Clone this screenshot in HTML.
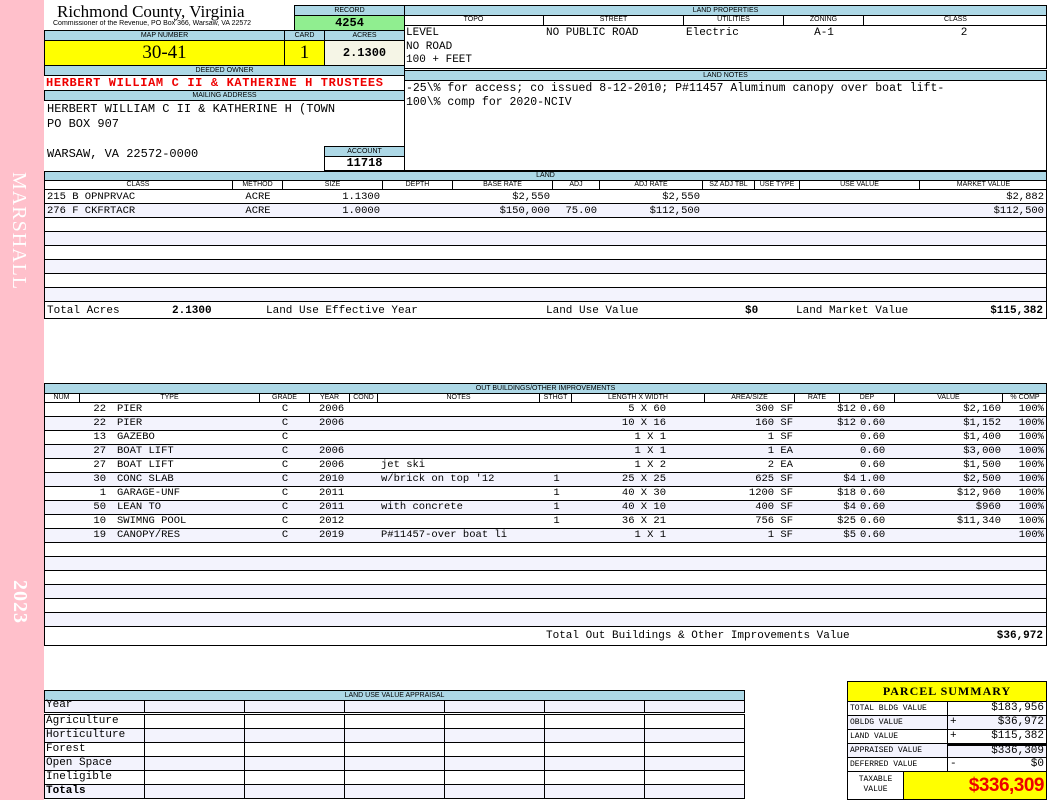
<!DOCTYPE html>
<html><head><meta charset="utf-8"><style>
*{margin:0;padding:0;box-sizing:border-box}
body{width:1050px;height:800px;position:relative;background:#fff;overflow:hidden;font-family:"Liberation Mono",monospace;color:#000}
.a{position:absolute;white-space:nowrap;overflow:hidden}
.h{background:#add8e6;font-family:"Liberation Sans",sans-serif;font-size:7px;text-align:center;line-height:10px;border:1px solid #000}
.ch{font-family:"Liberation Sans",sans-serif;font-size:7px;text-align:center;line-height:9px;border-right:1px solid #000}
.m{font-size:10.5px;line-height:14px}
.r{text-align:right}.c{text-align:center}
</style></head><body>
<div class="a" style="left:0;top:0;width:44px;height:800px;background:#ffc0cb"></div>
<div class="a" style="left:30px;top:172px;transform-origin:0 0;transform:rotate(90deg);color:#fff;font-family:'Liberation Serif',serif;font-size:20px;letter-spacing:1px">MARSHALL</div>
<div class="a" style="left:31px;top:580px;transform-origin:0 0;transform:rotate(90deg);color:#fff;font-family:'Liberation Serif',serif;font-size:20px;font-weight:bold;letter-spacing:1px">2023</div>

<div class="a" style="left:57px;top:2px;font-family:'Liberation Serif',serif;font-size:17px;line-height:20px">Richmond County, Virginia</div>
<div class="a" style="left:53px;top:20px;font-family:'Liberation Sans',sans-serif;font-size:7px;line-height:8px">Commissioner of the Revenue, PO Box 366, Warsaw, VA 22572</div>
<div class="a h" style="left:294px;top:5px;width:111px;height:11px">RECORD</div>
<div class="a c" style="left:294px;top:15px;width:111px;height:16px;background:#90ee90;border:1px solid #000;font-weight:bold;font-size:12px;line-height:14px">4254</div>

<div class="a h" style="left:44px;top:30px;width:241px;height:11px">MAP NUMBER</div>
<div class="a h" style="left:284px;top:30px;width:41px;height:11px">CARD</div>
<div class="a h" style="left:324px;top:30px;width:81px;height:11px">ACRES</div>
<div class="a c" style="left:44px;top:40px;width:241px;height:26px;background:#ffff00;border:1px solid #000;font-family:'Liberation Serif',serif;font-size:19px;line-height:24px">30-41</div>
<div class="a c" style="left:284px;top:40px;width:41px;height:26px;background:#ffff00;border:1px solid #000;font-family:'Liberation Serif',serif;font-size:19px;line-height:24px">1</div>
<div class="a c" style="left:324px;top:40px;width:81px;height:26px;background:#f5f5e6;border:1px solid #000;font-weight:bold;font-size:12px;line-height:24px">2.1300</div>
<div class="a h" style="left:44px;top:65px;width:361px;height:11px">DEEDED OWNER</div>
<div class="a" style="left:44px;top:75px;width:361px;height:16px;color:#e00;font-weight:bold;font-size:12px;line-height:16px;padding-left:2px;letter-spacing:0.65px">HERBERT WILLIAM C II &amp; KATHERINE H TRUSTEES</div>
<div class="a h" style="left:44px;top:90px;width:361px;height:11px">MAILING ADDRESS</div>
<div class="a" style="left:47px;top:102px;font-size:12px;line-height:15px">HERBERT WILLIAM C II &amp; KATHERINE H (TOWN<br>PO BOX 907<br><br>WARSAW, VA 22572-0000</div>
<div class="a h" style="left:324px;top:146px;width:81px;height:11px">ACCOUNT</div>
<div class="a c" style="left:324px;top:156px;width:81px;height:15px;border:1px solid #000;font-weight:bold;font-size:12px;line-height:13px">11718</div>

<div class="a" style="left:404px;top:5px;width:643px;height:64px;border:1px solid #000"></div>
<div class="a h" style="left:404px;top:5px;width:643px;height:11px">LAND PROPERTIES</div>
<div class="a" style="left:404px;top:15px;width:643px;height:11px;border-bottom:1px solid #000">
<div class="a ch" style="left:0;width:140px;height:10px">TOPO</div><div class="a ch" style="left:140px;width:140px;height:10px">STREET</div><div class="a ch" style="left:280px;width:100px;height:10px">UTILITIES</div><div class="a ch" style="left:380px;width:80px;height:10px">ZONING</div><div class="a ch" style="left:460px;width:183px;height:10px;border:0">CLASS</div></div>
<div class="a" style="left:406px;top:27px;font-size:11px;line-height:13.5px">LEVEL<br>NO ROAD<br>100 + FEET</div>
<div class="a" style="left:546px;top:27px;font-size:11px;line-height:13.5px">NO PUBLIC ROAD</div>
<div class="a" style="left:686px;top:27px;font-size:11px;line-height:13.5px">Electric</div>
<div class="a c" style="left:784px;width:80px;top:27px;font-size:11px;line-height:13.5px">A-1</div>
<div class="a c" style="left:864px;width:200px;top:27px;font-size:11px;line-height:13.5px">2</div>
<div class="a" style="left:404px;top:70px;width:643px;height:101px;border:1px solid #000"></div>
<div class="a h" style="left:404px;top:70px;width:643px;height:11px">LAND NOTES</div>
<div class="a" style="left:406px;top:82px;font-size:11.5px;line-height:14px">-25\% for access; co issued 8-12-2010; P#11457 Aluminum canopy over boat lift-<br>100\% comp for 2020-NCIV</div>

<script>
function el(p,s,cls,t){var d=document.createElement('div');d.className='a '+(cls||'');d.setAttribute('style',s);d.innerHTML=t||'';p.appendChild(d);return d}
var B=document.body,i,r,y;
// LAND
el(B,'left:44px;top:171px;width:1003px;height:148px;border:1px solid #000');
for(r=0;r<8;r++){y=190+r*14;el(B,'left:45px;top:'+y+'px;width:1001px;height:14px;background:'+(r%2?'#f3f3fd':'#fff'));}
for(r=1;r<9;r++){y=190+r*14-1;el(B,'left:44px;top:'+y+'px;width:1003px;height:1px;background:#000');}
el(B,'left:44px;top:171px;width:1003px;height:10px;line-height:8px','h','LAND');
var lc=[44,233,283,383,453,553,600,703,755,800,920,1047],ln=['CLASS','METHOD','SIZE','DEPTH','BASE RATE','ADJ','ADJ RATE','SZ ADJ TBL','USE TYPE','USE VALUE','MARKET VALUE'];
for(i=0;i<ln.length;i++)el(B,'left:'+lc[i]+'px;top:180px;width:'+(lc[i+1]-lc[i])+'px;height:10px;border-bottom:1px solid #000;'+(i==ln.length-1?'border-right:0':''),'ch',ln[i]);
var LR=[['215 B OPNPRVAC','ACRE','1.1300','','$2,550','','$2,550','','','','$2,882'],['276 F CKFRTACR','ACRE','1.0000','','$150,000','75.00','$112,500','','','','$112,500']];
LR.forEach(function(row,r){var y=190+r*14;row.forEach(function(t,i){if(!t)return;var al=i==0?'padding-left:3px':(i==1?'text-align:center':'text-align:right;padding-right:3px');el(B,'left:'+lc[i]+'px;top:'+y+'px;width:'+(lc[i+1]-lc[i])+'px;height:14px;'+al,'m',t)})});
el(B,'left:47px;top:304px;font-size:11px;line-height:14px','', 'Total Acres');
el(B,'left:172px;top:304px;font-size:11px;line-height:14px;font-weight:bold','', '2.1300');
el(B,'left:266px;top:304px;font-size:11px;line-height:14px','', 'Land Use Effective Year');
el(B,'left:546px;top:304px;font-size:11px;line-height:14px','', 'Land Use Value');
el(B,'left:745px;top:304px;font-size:11px;line-height:14px;font-weight:bold','', '$0');
el(B,'left:796px;top:304px;font-size:11px;line-height:14px','', 'Land Market Value');
el(B,'left:950px;width:93px;top:304px;font-size:11px;line-height:14px;font-weight:bold','r', '$115,382');
// OUTBUILDINGS
el(B,'left:44px;top:383px;width:1003px;height:263px;border:1px solid #000');
var rowsY=[];for(r=0;r<16;r++)rowsY.push(403+r*14);
rowsY.forEach(function(y,r){el(B,'left:45px;top:'+y+'px;width:1001px;height:14px;background:'+(r%2?'#f3f3fd':'#fff'));});
for(r=1;r<=16;r++){y=403+r*14-1;el(B,'left:44px;top:'+y+'px;width:1003px;height:1px;background:#000');}
el(B,'left:44px;top:383px;width:1003px;height:11px;line-height:9px','h','OUT BUILDINGS/OTHER IMPROVEMENTS');
var oc=[44,80,260,310,350,378,540,572,705,795,840,895,1003,1047],on=['NUM','TYPE','GRADE','YEAR','COND','NOTES','STHGT','LENGTH X WIDTH','AREA/SIZE','RATE','DEP','VALUE','% COMP'];
for(i=0;i<on.length;i++)el(B,'left:'+oc[i]+'px;top:393px;width:'+(oc[i+1]-oc[i])+'px;height:10px;border-bottom:1px solid #000;'+(i==on.length-1?'border-right:0':''),'ch',on[i]);
var OR=[['22','PIER','C','2006','','','','5 X 60','300 SF','$12','0.60','$2,160','100%'],
['22','PIER','C','2006','','','','10 X 16','160 SF','$12','0.60','$1,152','100%'],
['13','GAZEBO','C','','','','','1 X 1','1 SF','','0.60','$1,400','100%'],
['27','BOAT LIFT','C','2006','','','','1 X 1','1 EA','','0.60','$3,000','100%'],
['27','BOAT LIFT','C','2006','','jet ski','','1 X 2','2 EA','','0.60','$1,500','100%'],
['30','CONC SLAB','C','2010','','w/brick on top \'12','1','25 X 25','625 SF','$4','1.00','$2,500','100%'],
['1','GARAGE-UNF','C','2011','','','1','40 X 30','1200 SF','$18','0.60','$12,960','100%'],
['50','LEAN TO','C','2011','','with concrete','1','40 X 10','400 SF','$4','0.60','$960','100%'],
['10','SWIMNG POOL','C','2012','','','1','36 X 21','756 SF','$25','0.60','$11,340','100%'],
['19','CANOPY/RES','C','2019','','P#11457-over boat li','','1 X 1','1 SF','$5','0.60','','100%']];
OR.forEach(function(row,r){var y=403+r*14-1;
 el(B,'left:44px;width:62px;top:'+y+'px;text-align:right','m',row[0]);
 el(B,'left:117px;top:'+y+'px','m',row[1]);
 el(B,'left:260px;width:50px;top:'+y+'px;text-align:center','m',row[2]);
 el(B,'left:319px;top:'+y+'px','m',row[3]);
 el(B,'left:381px;top:'+y+'px','m',row[5]);
 el(B,'left:540px;width:33px;top:'+y+'px;text-align:center','m',row[6]);
 el(B,'left:572px;width:94px;top:'+y+'px;text-align:right','m',row[7]);
 el(B,'left:705px;width:88px;top:'+y+'px;text-align:right','m',row[8]);
 el(B,'left:795px;width:61px;top:'+y+'px;text-align:right','m',row[9]);
 el(B,'left:860px;top:'+y+'px','m',row[10]);
 el(B,'left:895px;width:106px;top:'+y+'px;text-align:right','m',row[11]);
 el(B,'left:1003px;width:41px;top:'+y+'px;text-align:right','m',row[12]);
});
el(B,'left:546px;top:629px;font-size:11px;line-height:14px','','Total Out Buildings &amp; Other Improvements Value');
el(B,'left:950px;width:93px;top:629px;font-size:11px;line-height:14px;font-weight:bold','r','$36,972');
// LAND USE VALUE
el(B,'left:44px;top:690px;width:701px;height:11px;line-height:9px','h','LAND USE VALUE APPRAISAL');
el(B,'left:44px;top:700px;width:701px;height:13px;border:1px solid #000;background:#f3f3fd');
el(B,'left:44px;top:714px;width:701px;height:85px;border:1px solid #000');
var lr=['Agriculture','Horticulture','Forest','Open Space','Ineligible','Totals'];
lr.forEach(function(t,r){var y=715+r*14;el(B,'left:45px;top:'+y+'px;width:699px;height:13px;background:'+(r%2?'#f3f3fd':'#fff'));
 if(r>0)el(B,'left:44px;top:'+(y-1)+'px;width:701px;height:1px;background:#000');
 el(B,'left:46px;top:'+(y-1)+'px;font-size:11px;line-height:14px;'+(r==5?'font-weight:bold':''),'',t);});
el(B,'left:46px;top:699px;font-size:11px;line-height:13px','','Year');
for(var k=1;k<7;k++){el(B,'left:'+(44+k*100)+'px;top:700px;width:1px;height:13px;background:#000');el(B,'left:'+(44+k*100)+'px;top:714px;width:1px;height:85px;background:#000');}
</script>

<div class="a" style="left:847px;top:681px;width:200px;height:119px;border:1px solid #000"></div>
<div class="a c" style="left:847px;top:681px;width:200px;height:21px;background:#ffff00;border:1px solid #000;font-family:'Liberation Serif',serif;font-weight:bold;font-size:12px;line-height:19px;letter-spacing:1px">PARCEL SUMMARY</div>
<script>
var pr=[['TOTAL BLDG VALUE','','$183,956'],['OBLDG VALUE','+','$36,972'],['LAND VALUE','+','$115,382'],['APPRAISED VALUE','','$336,309'],['DEFERRED VALUE','-','$0']];
pr.forEach(function(p,r){var y=701+r*14;
 el(B,'left:847px;top:'+y+'px;width:101px;height:15px;border:1px solid #000;font-size:8px;line-height:13px;padding-left:2px;background:'+(r%2?'#f3f3fd':'#fff'),'',p[0]);
 el(B,'left:947px;top:'+y+'px;width:100px;height:15px;border:1px solid #000;font-size:11px;line-height:13px;padding-right:2px;text-align:right;'+(r==3?'border-top:3px solid #000;line-height:11px;':'')+'background:'+(r%2?'#f3f3fd':'#fff'),'',p[2]);
 if(p[1])el(B,'left:950px;top:'+y+'px;font-size:11px;line-height:14px','',p[1]);
});
</script>
<div class="a c" style="left:847px;top:771px;width:57px;height:29px;font-size:8px;line-height:10px;padding-top:3px;border:1px solid #000">TAXABLE<br>VALUE</div>
<div class="a r" style="left:903px;top:771px;width:144px;height:29px;background:#ffff00;border:1px solid #000;color:#e00;font-family:'Liberation Sans',sans-serif;font-weight:bold;font-size:19px;line-height:27px;padding-right:2px;letter-spacing:-0.5px">$336,309</div>
</body></html>
